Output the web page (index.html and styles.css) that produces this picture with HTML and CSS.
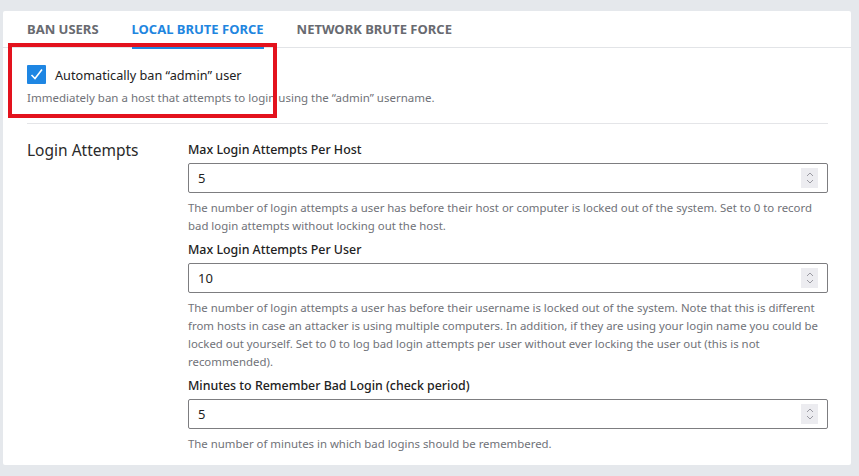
FILE: index.html
```html
<!DOCTYPE html>
<html>
<head>
<meta charset="utf-8">
<link rel="stylesheet" href="styles.css">
</head>
<body>
<div class="card">
  <div class="tabs">
    <div class="tab">BAN USERS</div>
    <div class="tab active">LOCAL BRUTE FORCE</div>
    <div class="tab">NETWORK BRUTE FORCE</div>
  </div>
  <div class="content">
    <div class="check-row">
      <span class="checkbox"><svg width="19" height="19" viewBox="0 0 19 19"><path d="M4.5 10 L8 13.5 L15 4.5" fill="none" stroke="#fff" stroke-width="1.6"/></svg></span>
      <span class="check-label">Automatically ban “admin” user</span>
    </div>
    <div class="desc">Immediately ban a host that attempts to login using the “admin” username.</div>
    <div class="section">
      <div class="section-title">Login Attempts</div>
      <div class="fields">
        <div class="field">
          <div class="field-label">Max Login Attempts Per Host</div>
          <div class="input"><span>5</span><span class="spin"><svg width="10" height="16" viewBox="0 0 10 16"><path d="M2 6 L5 3 L8 6 M2 10 L5 13 L8 10" fill="none" stroke="#9a9aa2" stroke-width="1"/></svg></span></div>
          <div class="help">The number of login attempts a user has before their host or computer is locked out of the system. Set to 0 to record bad login attempts without locking out the host.</div>
        </div>
        <div class="field">
          <div class="field-label">Max Login Attempts Per User</div>
          <div class="input"><span>10</span><span class="spin"><svg width="10" height="16" viewBox="0 0 10 16"><path d="M2 6 L5 3 L8 6 M2 10 L5 13 L8 10" fill="none" stroke="#9a9aa2" stroke-width="1"/></svg></span></div>
          <div class="help">The number of login attempts a user has before their username is locked out of the system. Note that this is different from hosts in case an attacker is using multiple computers. In addition, if they are using your login name you could be locked out yourself. Set to 0 to log bad login attempts per user without ever locking the user out (this is not recommended).</div>
        </div>
        <div class="field">
          <div class="field-label">Minutes to Remember Bad Login (check period)</div>
          <div class="input"><span>5</span><span class="spin"><svg width="10" height="16" viewBox="0 0 10 16"><path d="M2 6 L5 3 L8 6 M2 10 L5 13 L8 10" fill="none" stroke="#9a9aa2" stroke-width="1"/></svg></span></div>
          <div class="help">The number of minutes in which bad logins should be remembered.</div>
        </div>
      </div>
    </div>
  </div>
  <div class="highlight"></div>
</div>
</body>
</html>
```
FILE: styles.css
```css
html, body {
  margin: 0;
  padding: 0;
  background: #e5e8ec;
}
body {
  padding: 11px 8px 0 3px;
  font-family: "Noto Sans", "Open Sans", sans-serif;
  color: #2b2b2b;
}
.card {
  position: relative;
  background: #fff;
  width: 848px;
  height: 454px;
  box-sizing: border-box;
  border-radius: 2px;
}
.tabs {
  display: flex;
  gap: 33px;
  padding-left: 24px;
  border-bottom: 1px solid #e2e4e7;
  height: 36px;
}
.tab {
  font-size: 13px;
  font-weight: 700;
  color: #686a70;
  line-height: 36px;
  height: 36px;
  border-bottom: 2px solid transparent;
}
.tab.active {
  color: #1f86e0;
  border-bottom-color: #1f86e0;
}
.content {
  padding: 17px 23px 0 24px;
}
.check-row {
  display: flex;
  align-items: center;
  gap: 9px;
  height: 19px;
}
.checkbox {
  width: 19px;
  height: 19px;
  background: #1e86e3;
  border-radius: 1px;
  display: block;
}
.checkbox svg { display: block; }
.check-label {
  font-size: 12.7px;
  color: #222;
}
.desc {
  margin-top: 5px;
  font-size: 11.5px;
  line-height: 18px;
  color: #707278;
  padding-bottom: 16px;
  border-bottom: 1px solid #e4e5e8;
}
.section {
  display: flex;
  padding-top: 17px;
}
.section-title {
  width: 161px;
  flex: none;
  font-size: 15.5px;
  line-height: 18px;
  color: #2a2a2a;
}
.fields {
  flex: 1;
  display: flex;
  flex-direction: column;
  gap: 6px;
}
.field-label {
  font-size: 12.4px;
  font-weight: 500;
  line-height: 18px;
  color: #222;
  margin-bottom: 4px;
}
.input {
  height: 30px;
  box-sizing: border-box;
  border: 1px solid #7d7d80;
  border-radius: 2px;
  display: flex;
  align-items: center;
  justify-content: space-between;
  padding: 0 9px 0 9px;
  font-size: 13px;
  color: #222;
}
.spin {
  width: 17px;
  height: 20px;
  background: #ececf0;
  display: flex;
  align-items: center;
  justify-content: center;
}
.spin svg { display: block; }
.help {
  margin-top: 6px;
  font-size: 11.4px;
  line-height: 18px;
  color: #707278;
}
.highlight {
  position: absolute;
  left: 5px;
  top: 32px;
  width: 269px;
  height: 75px;
  box-sizing: border-box;
  border: 4px solid #e3121d;
}
```
